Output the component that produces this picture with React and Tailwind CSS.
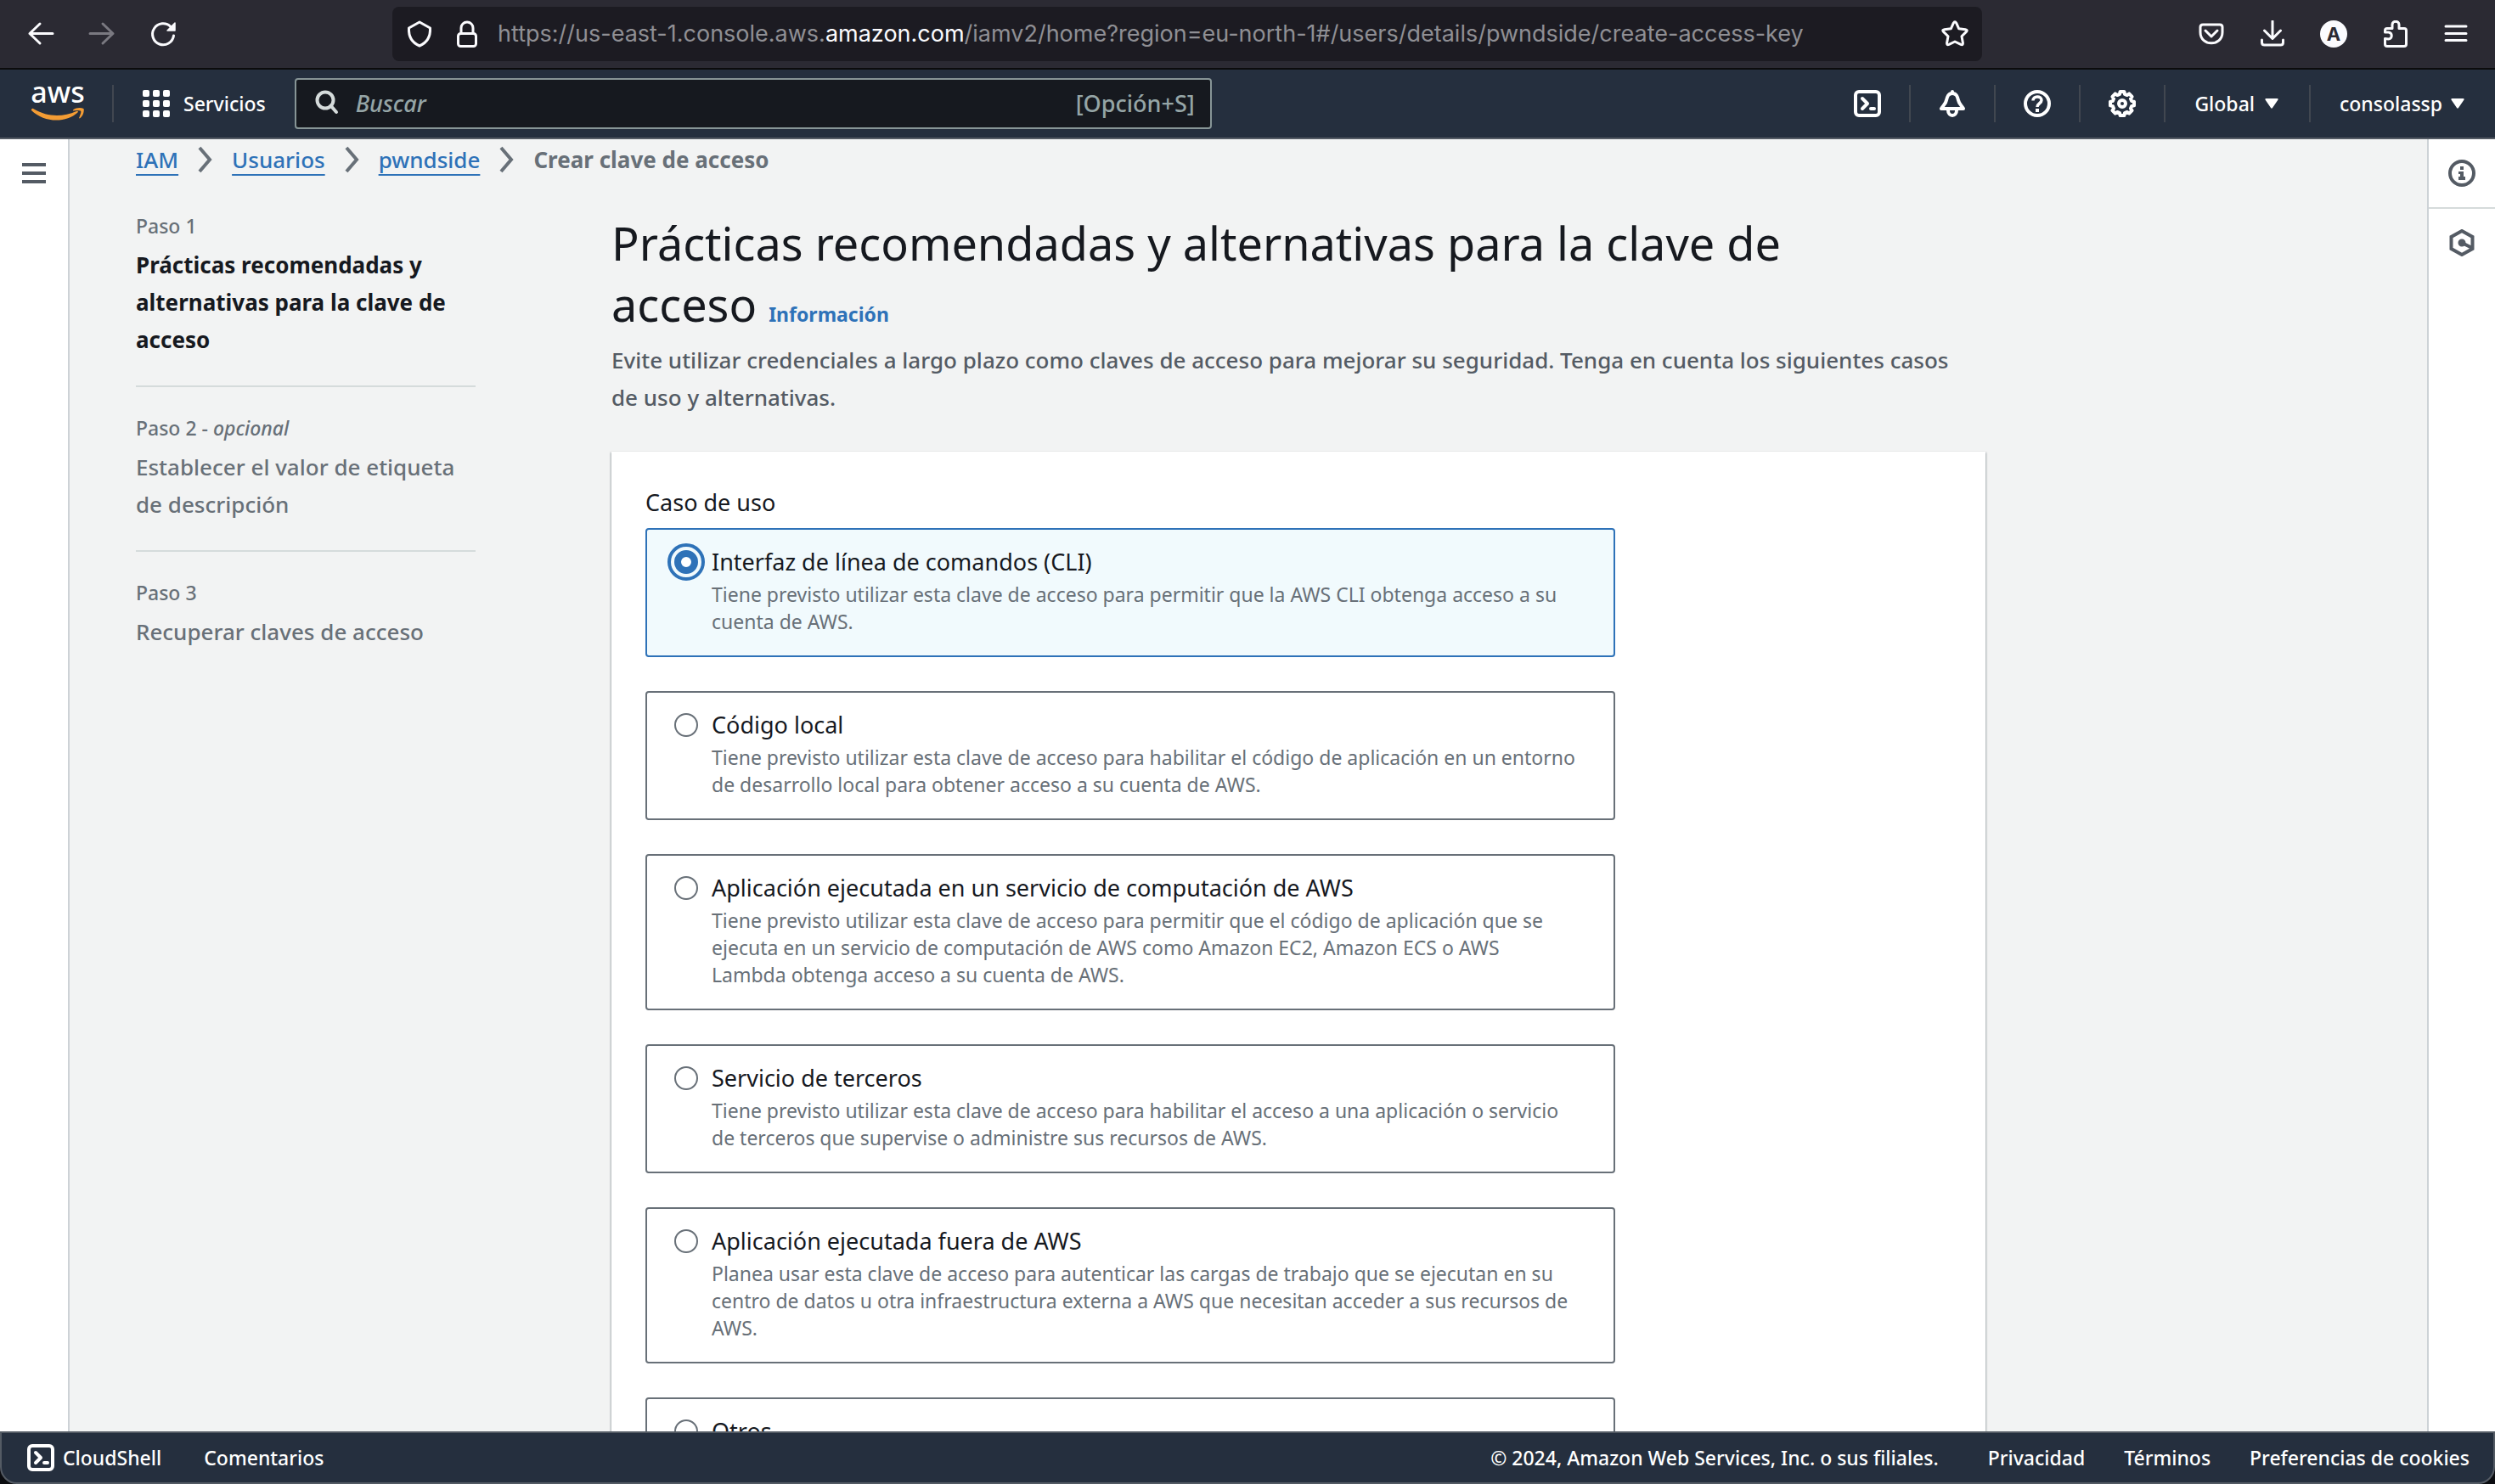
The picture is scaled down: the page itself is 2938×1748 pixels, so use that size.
import React, { useState } from "react";

const line = { fill: "none", stroke: "currentColor", strokeLinecap: "round", strokeLinejoin: "round" };

function Icon({ children, className = "", width = 3 }) {
  return (
    <svg viewBox="0 0 32 32" className={"size-8 shrink-0 " + className} {...line} strokeWidth={width} aria-hidden="true">
      {children}
    </svg>
  );
}

const TerminalIcon = () => (
  <Icon width={4}>
    <rect x="2" y="2" width="28" height="28" rx="4" />
    <path d="M10 10l6 6-6 6M20 22h4" />
  </Icon>
);

const BellIcon = () => (
  <Icon width={4}>
    <path d="M16 2v2M16 4c-5 0-6 4-7 8-1 5-4 6-6 10h26c-2-4-5-5-6-10-1-4-2-8-7-8z" />
    <path d="M11 24c0 8 10 8 10 0" />
  </Icon>
);

const HelpIcon = () => (
  <Icon width={4}>
    <circle cx="16" cy="16" r="14" />
    <path d="M11 12.500c0-6 10-6 10-.5 0 4-5 3.500-5 8" strokeLinecap="butt" strokeWidth="3.500" />
    <path d="M14 22h4v4h-4z" fill="currentColor" stroke="none" />
  </Icon>
);

const gearPoints = Array.from({ length: 8 }, (_, i) => {
  const c = (i * Math.PI) / 4;
  return [
    [c - 0.26, 11.5],
    [c - 0.17, 14.2],
    [c + 0.17, 14.2],
    [c + 0.26, 11.5],
  ].map(([a, r]) => `${(16 + r * Math.sin(a)).toFixed(2)},${(16 - r * Math.cos(a)).toFixed(2)}`);
})
  .flat()
  .join(" ");

const GearIcon = () => (
  <Icon width={4}>
    <polygon points={gearPoints} />
    <circle cx="16" cy="16" r="4" />
  </Icon>
);

const Caret = () => (
  <svg viewBox="0 0 16 12" className="h-3 w-4 fill-current" aria-hidden="true">
    <path d="M1.500 0h13q1.500 0 1 1.500L9 11q-1 1.500-2 0L0.500 1.500Q0 0 1.500 0z" />
  </svg>
);

function BrowserBar() {
  return (
    <div className="flex h-[82px] shrink-0 items-center border-b-2 border-[#0c0c0d] bg-[#2b2a33] pr-[30px] pl-8 text-[#fbfbfe]">
      <div className="flex items-center gap-10">
        <button type="button" aria-label="Atrás">
          <Icon className="block"><path d="M30 15.500H3M15 4L3 15.500 15 27" /></Icon>
        </button>
        <button type="button" aria-label="Adelante" className="text-[#7a7981]">
          <Icon className="block"><path d="M2 15.500h27M17 4l12 11.500L17 27" /></Icon>
        </button>
        <button type="button" aria-label="Recargar">
          <Icon className="block">
            <path d="M25 7.500A12.500 12.500 0 1 0 28.500 18" />
            <path d="M30 3v9h-9z" fill="currentColor" strokeWidth="1.500" />
          </Icon>
        </button>
      </div>
      <div className="mx-[254px] flex h-16 min-w-0 flex-1 items-center rounded-lg bg-[#1c1b22] px-4">
        <Icon className="mr-6"><path d="M16 2L28.500 9c.5 9-3 17-12.500 21C6.500 26 3 18 3.500 9z" /></Icon>
        <Icon className="mr-5">
          <rect x="5.500" y="15.500" width="21" height="15" rx="3" />
          <path d="M9 15V9a7 7 0 0 1 14 0v6" />
        </Icon>
        <div className="min-w-0 flex-1 whitespace-nowrap font-[Inter,sans-serif] text-[27px] leading-10 text-[#8f8f94]">
          https://us-east-1.console.aws.<span className="text-[#fbfbfe]">amazon.com</span>
          /iamv2/home?region=eu-north-1#/users/details/pwndside/create-access-key
        </div>
        <button type="button" aria-label="Añadir a marcadores">
          <Icon className="block">
            <path d="M14.300 3.200q1.700-3 3.400 0l3 6.600 7.600.9q3.300.5.900 2.900l-5.200 5.200 1.400 7.700q.3 3-2.400 1.800L16 25l-7 3.300q-2.700 1.200-2.400-1.800L8 18.800l-5.200-5.200q-2.400-2.400.9-2.900l7.600-.9z" />
          </Icon>
        </button>
      </div>
      <div className="flex items-center gap-10">
        <button type="button" aria-label="Pocket">
          <Icon className="block">
            <path d="M6 5h20q3 0 3 3v6c0 17-26 17-26 0V8q0-3 3-3zM9 12l7 7 7-7" />
          </Icon>
        </button>
        <button type="button" aria-label="Descargas">
          <Icon className="block">
            <path d="M16 1v20M6.500 12l9.500 9.500 9.500-9.500M3.500 23v3q0 3 3 3h19q3 0 3-3v-3" />
          </Icon>
        </button>
        <button type="button" aria-label="Cuenta" className="flex size-8 items-center justify-center rounded-full bg-[#fbfbfe] font-[Inter,sans-serif] text-[22px] leading-8 font-bold text-[#2b2a33]">
          A
        </button>
        <button type="button" aria-label="Extensiones">
          <Icon className="block">
            <path d="M4.500 21.500V28q0 2.500 2.500 2.500h20q2.500 0 2.500-2.500V12q0-2.500-2.500-2.500h-6V5c0-5-8-5-8 0v4.500H7Q4.500 9.500 4.500 12v2h4c5 0 5 8 0 8z" />
          </Icon>
        </button>
        <button type="button" aria-label="Menú">
          <Icon className="block"><path d="M4 7h24M4 15.500h24M4 23.500h24" /></Icon>
        </button>
      </div>
    </div>
  );
}

function AwsHeader() {
  const cell = "flex h-11 w-[100px] items-center justify-center border-r-2 border-[#414750]";
  return (
    <header className="flex h-[82px] shrink-0 items-center border-b-2 border-[#545b64] bg-[#252f3e] text-[23px] leading-8 font-medium text-white">
      <div className="flex h-11 w-[134px] items-center border-r-2 border-[#414750] pl-9">
        <a href="#inicio" aria-label="AWS" className="flex w-16 flex-col items-center">
          <span className="text-[34px] leading-6">aws</span>
          <svg viewBox="0 0 64 28" className="h-7 w-16" aria-hidden="true">
            <path fill="#f39c34" d="M1 9q1-2 3-.5C20 18 38 18 54 11q3-1 1.500 1.500C42 25 16 25 1 10q-.5-.5 0-1z" />
            <path fill="#f39c34" d="M50 9.500c4-3 9-3 12.500-1.500 1 3-1 9-4 11-1 1-2 0-1-1 1-3 2.500-6 1.500-7.500-2-1-6-.5-9 0z" />
          </svg>
        </a>
      </div>
      <button type="button" className="ml-[34px] flex items-center gap-4">
        <svg viewBox="0 0 32 32" className="size-8 fill-current" aria-hidden="true">
          {[0, 12, 24].map((y) => [0, 12, 24].map((x) => <rect key={x + "-" + y} x={x} y={y} width="8" height="8" rx="2" />))}
        </svg>
        Servicios
      </button>
      <div className="ml-[34px] flex h-[60px] w-[1080px] items-center rounded border-2 border-[#879596] bg-[#16191f] pr-[18px] pl-[22px] text-[27px] text-[#95a5a6]">
        <Icon width={4} className="mr-4 text-[#d5dbdb]">
          <circle cx="12" cy="12" r="9.500" />
          <path d="M18.500 18.500L25 26" />
        </Icon>
        <input type="search" aria-label="Buscar" placeholder="Buscar" className="min-w-0 flex-1 bg-transparent outline-none placeholder:text-[#95a5a6] placeholder:italic" />
        <span>[Opción+S]</span>
      </div>
      <div className="ml-auto flex items-center">
        <button type="button" aria-label="CloudShell" className={cell}><TerminalIcon /></button>
        <button type="button" aria-label="Notificaciones" className={cell}><BellIcon /></button>
        <button type="button" aria-label="Ayuda" className={cell}><HelpIcon /></button>
        <button type="button" aria-label="Configuración" className={cell}><GearIcon /></button>
        <button type="button" className="flex h-11 items-center gap-3 border-r-2 border-[#414750] pr-9 pl-[34px]">
          Global <Caret />
        </button>
        <button type="button" className="flex h-11 items-center gap-2.5 pr-9 pl-[34px]">
          consolassp <Caret />
        </button>
      </div>
    </header>
  );
}

function Breadcrumbs() {
  const items = ["IAM", "Usuarios", "pwndside"];
  return (
    <nav aria-label="Ruta" className="flex items-center gap-[23px] pt-0.5 text-[26px] leading-[44px] font-medium text-[#2e72b8]">
      {items.map((t) => (
        <React.Fragment key={t}>
          <a href={"#" + t} className="underline decoration-2 underline-offset-[7px] [text-decoration-skip-ink:none]">{t}</a>
          <svg viewBox="0 0 17 32" className="h-8 w-[17px] text-[#687078]" {...line} strokeLinecap="butt" strokeLinejoin="miter" strokeWidth="4" aria-hidden="true">
            <path d="M2 2l12 14L2 30" />
          </svg>
        </React.Fragment>
      ))}
      <span className="font-bold text-[#687078]">Crear clave de acceso</span>
    </nav>
  );
}

const STEPS = [
  { n: "Paso 1", title: "Prácticas recomendadas y alternativas para la clave de acceso", active: true },
  { n: "Paso 2", optional: true, title: "Establecer el valor de etiqueta de descripción" },
  { n: "Paso 3", title: "Recuperar claves de acceso" },
];

function Steps() {
  return (
    <ol className="w-[400px] shrink-0 font-medium text-[#687078]">
      {STEPS.map((s) => (
        <li key={s.n} className="border-b-2 border-[#d5dbdb] pt-[30px] pb-8 first:pt-0 last:border-b-0">
          <div className="text-[23px] leading-9">
            {s.n}
            {s.optional && <> - <i>opcional</i></>}
          </div>
          <div className={s.active ? "mt-1.5 text-[26px] leading-[44px] font-bold text-[#16191f]" : "mt-1.5 text-[26px] leading-[44px]"}>{s.title}</div>
        </li>
      ))}
    </ol>
  );
}

const OPTIONS = [
  ["cli", "Interfaz de línea de comandos (CLI)", "Tiene previsto utilizar esta clave de acceso para permitir que la AWS CLI obtenga acceso a su cuenta de AWS."],
  ["local", "Código local", "Tiene previsto utilizar esta clave de acceso para habilitar el código de aplicación en un entorno de desarrollo local para obtener acceso a su cuenta de AWS."],
  ["compute", "Aplicación ejecutada en un servicio de computación de AWS", "Tiene previsto utilizar esta clave de acceso para permitir que el código de aplicación que se ejecuta en un servicio de computación de AWS como Amazon EC2, Amazon ECS o AWS\nLambda obtenga acceso a su cuenta de AWS."],
  ["third", "Servicio de terceros", "Tiene previsto utilizar esta clave de acceso para habilitar el acceso a una aplicación o servicio de terceros que supervise o administre sus recursos de AWS."],
  ["outside", "Aplicación ejecutada fuera de AWS", "Planea usar esta clave de acceso para autenticar las cargas de trabajo que se ejecutan en su centro de datos u otra infraestructura externa a AWS que necesitan acceder a sus recursos de AWS."],
  ["other", "Otros", ""],
];

function UseCases() {
  const [value, setValue] = useState("cli");
  return (
    <fieldset className="max-w-[1142px]">
      <legend className="mb-2 text-[27px] leading-[44px] text-[#16191f]">Caso de uso</legend>
      <div className="flex flex-col gap-10">
        {OPTIONS.map(([id, title, text]) => (
          <label
            key={id}
            className="grid grid-cols-[28px_1fr] gap-x-4 rounded border-2 border-[#687078] bg-white pt-4 pr-8 pb-6 pl-8 has-checked:border-[#2e72b8] has-checked:bg-[#f1fafd]"
          >
            <input
              type="radio"
              name="use-case"
              checked={value === id}
              onChange={() => setValue(id)}
              aria-label={title}
              className="size-7 appearance-none self-center rounded-full border-2 border-[#687078] bg-white outline-offset-4 outline-[#2e72b8] checked:border-8 checked:border-[#2e72b8] checked:outline-4"
            />
            <span className="text-[27px] leading-[44px] text-[#16191f]">{title}</span>
            <span className="col-start-2 text-[23px] leading-8 whitespace-pre-line text-[#687078]">{text}</span>
          </label>
        ))}
      </div>
    </fieldset>
  );
}

function Content() {
  return (
    <main className="min-w-0 flex-1 overflow-hidden bg-[#f2f3f3] pl-[78px]">
      <Breadcrumbs />
      <div className="flex max-w-[2178px] gap-40 pt-[38px]">
        <Steps />
        <div className="min-w-0 flex-1 pt-0.5">
          <h1 className="text-[54px] leading-[72px] text-[#16191f]">
            Prácticas recomendadas y alternativas para la clave de{" "}
            <span className="whitespace-nowrap">
              acceso <a href="#info" className="text-[23px] leading-8 font-bold text-[#2e72b8]">Información</a>
            </span>
          </h1>
          <p className="mt-2 pr-6 text-[26px] leading-[44px] font-medium text-[#545b64]">
            Evite utilizar credenciales a largo plazo como claves de acceso para mejorar su seguridad. Tenga en cuenta los siguientes casos de uso y alternativas.
          </p>
          <section className="mt-[42px] bg-white px-10 pt-[38px] pb-10 shadow-[1px_1px_2px_0_rgba(0,28,36,0.3),-1px_1px_2px_0_rgba(0,28,36,0.3)]">
            <UseCases />
          </section>
        </div>
      </div>
    </main>
  );
}

function Footer() {
  return (
    <footer className="flex h-[62px] shrink-0 items-center rounded-b-[20px] border-2 border-[#545b64] bg-[#252f3e] pr-7 pl-[30px] text-[23px] leading-8 font-medium text-white">
      <button type="button" className="flex items-center gap-2.5"><TerminalIcon />CloudShell</button>
      <button type="button" className="ml-[50px]">Comentarios</button>
      <div className="ml-auto flex items-center gap-[46px]">
        <span className="mr-3">© 2024, Amazon Web Services, Inc. o sus filiales.</span>
        <a href="#privacidad">Privacidad</a>
        <a href="#terminos">Términos</a>
        <a href="#cookies">Preferencias de cookies</a>
      </div>
    </footer>
  );
}

export default function App() {
  return (
    <div className="flex h-screen flex-col overflow-hidden bg-[#0b0c10] font-['Noto_Sans','Open_Sans',sans-serif]">
      <BrowserBar />
      <AwsHeader />
      <div className="flex min-h-0 flex-1 bg-white">
        <aside className="w-[82px] shrink-0 border-r-2 border-[#cdd2d6] pt-7 pl-[26px] text-[#545b64]">
          <button type="button" aria-label="Abrir navegación" className="block">
            <svg viewBox="0 0 28 24" className="h-6 w-7 fill-current" aria-hidden="true">
              <path d="M0 0h28v4H0zM0 10h28v4H0zM0 20h28v4H0z" />
            </svg>
          </button>
        </aside>
        <Content />
        <aside className="w-20 shrink-0 border-l-2 border-[#cdd2d6] text-[#545b64]">
          <button type="button" aria-label="Información" className="flex h-[82px] w-full items-center justify-center border-b-2 border-[#d5dbdb]">
            <Icon width={4}>
              <circle cx="16" cy="16" r="14" />
              <path d="M14 8h4v4h-4zM12 14h6v6h2v4h-8v-4h2v-3h-2z" fill="currentColor" stroke="none" />
            </Icon>
          </button>
          <button type="button" aria-label="Tutoriales" className="flex h-20 w-full items-center justify-center">
            <Icon width={4}>
              <path d="M16 2l12.500 7v14L16 30 3.500 23V9zM16 16l12 6" strokeLinejoin="miter" />
              <circle cx="16" cy="16" r="2.500" />
            </Icon>
          </button>
        </aside>
      </div>
      <Footer />
    </div>
  );
}
